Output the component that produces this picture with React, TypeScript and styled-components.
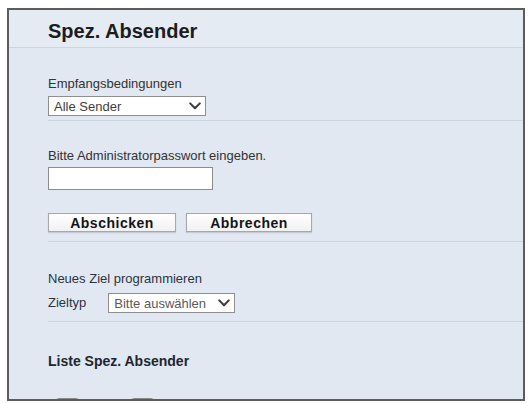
import styled, { createGlobalStyle } from "styled-components";

const GlobalStyle = createGlobalStyle`
  html, body {
    margin: 0;
    padding: 0;
    background: #ffffff;
  }
  body {
    font-family: "Liberation Sans", Arial, sans-serif;
  }
  * {
    box-sizing: border-box;
  }
`;

export default function App() {
  return (
    <>
      <GlobalStyle />
      <Frame>
        <Header>
          <Title>Spez. Absender</Title>
        </Header>

        <Section $top={28} $bottom={4}>
          <Label>Empfangsbedingungen</Label>
          <SelectBox $width={158}>
            <span>Alle Sender</span>
            <Chevron />
          </SelectBox>
        </Section>

        <Section $top={27} $bottom={9}>
          <Label>Bitte Administratorpasswort eingeben.</Label>
          <PasswordInput type="password" />
          <ButtonRow>
            <Button $width={128}>Abschicken</Button>
            <Button $width={126}>Abbrechen</Button>
          </ButtonRow>
        </Section>

        <Section $top={29} $bottom={8}>
          <Label $dark>Neues Ziel programmieren</Label>
          <FieldRow>
            <Label $dark>Zieltyp</Label>
            <SelectBox $width={127} $muted>
              <span>Bitte auswählen</span>
              <Chevron />
            </SelectBox>
          </FieldRow>
        </Section>

        <Section $top={31} $bottom={0} $last>
          <ListTitle>Liste Spez. Absender</ListTitle>
          <ToolRow>
            <ToolButton />
            <ToolButton />
          </ToolRow>
        </Section>
      </Frame>
    </>
  );
}

function Chevron() {
  return (
    <svg width="12" height="8" viewBox="0 0 12 8">
      <path
        d="M1.2 1.4 L6 6.2 L10.8 1.4"
        fill="none"
        stroke="#3a3a3a"
        strokeWidth="2"
        strokeLinecap="round"
        strokeLinejoin="round"
      />
    </svg>
  );
}

const Frame = styled.div`
  margin: 8px 0 0 7px;
  width: 518px;
  height: 393px;
  border: 2px solid #5c5c5c;
  background: #e1e8f1;
  overflow: hidden;
  display: flex;
  flex-direction: column;
`;

const Header = styled.div`
  padding: 5px 0 0 39px;
  height: 39px;
  border-bottom: 1px solid #cdd5df;
  background: #e5ebf3;
`;

const Title = styled.h1`
  margin: 0;
  font-size: 20px;
  line-height: 32px;
  font-weight: bold;
  color: #1c1c1c;
`;

const Section = styled.div<{ $top: number; $bottom: number; $last?: boolean }>`
  margin-left: 39px;
  padding: ${({ $top }) => $top}px 0 ${({ $bottom }) => $bottom}px 0;
  border-bottom: ${({ $last }) => ($last ? "none" : "1px solid #cdd5df")};
  display: flex;
  flex-direction: column;
  align-items: flex-start;
`;

const Label = styled.div<{ $dark?: boolean }>`
  font-size: 13px;
  line-height: 16px;
  color: ${({ $dark }) => ($dark ? "#2a3442" : "#333333")};
`;

const SelectBox = styled.div<{ $width: number; $muted?: boolean }>`
  width: ${({ $width }) => $width}px;
  height: 20px;
  margin-top: 4px;
  padding: 0 4px 0 5px;
  display: flex;
  align-items: center;
  justify-content: space-between;
  flex-shrink: 0;
  background: #ffffff;
  border: 1px solid #8f8f8f;
  font-size: 13px;
  color: ${({ $muted }) => ($muted ? "#5a5a5a" : "#404040")};
`;

const PasswordInput = styled.input`
  width: 165px;
  height: 23px;
  margin: 3px 0 0 0;
  border: 1px solid #8c8c8c;
  background: #ffffff;
  outline: none;
`;

const ButtonRow = styled.div`
  display: flex;
  gap: 10px;
  margin-top: 23px;
`;

const Button = styled.button<{ $width: number }>`
  width: ${({ $width }) => $width}px;
  height: 19px;
  padding: 0;
  font-family: "Liberation Sans", Arial, sans-serif;
  font-size: 14px;
  font-weight: bold;
  letter-spacing: 0.5px;
  color: #141414;
  background: linear-gradient(#ffffff, #f1f1f1);
  border: 1px solid #a7a7a7;
  box-shadow: 0 1px 1px rgba(0, 0, 0, 0.12);
  cursor: pointer;
`;

const FieldRow = styled.div`
  display: flex;
  align-items: center;
  gap: 22px;
  margin-top: 6px;

  ${SelectBox} {
    margin-top: 0;
  }
`;

const ListTitle = styled.div`
  font-size: 14px;
  line-height: 16px;
  font-weight: bold;
  color: #20262e;
`;

const ToolRow = styled.div`
  display: flex;
  gap: 50px;
  margin: 29px 0 0 7px;
`;

const ToolButton = styled.div`
  width: 25px;
  height: 18px;
  border: 1px solid #8a8a8a;
  border-radius: 4px;
  background: linear-gradient(#c9ced5, #e1e5ea);
`;
